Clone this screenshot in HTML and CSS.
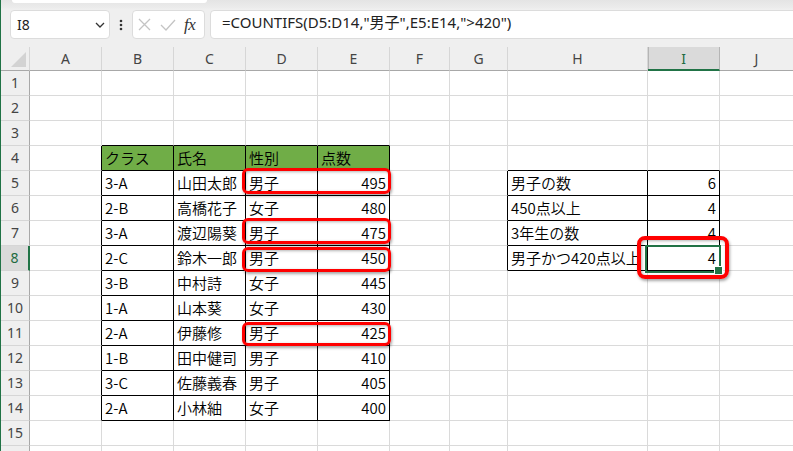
FILE: index.html
```html
<!DOCTYPE html>
<html lang="ja">
<head>
    <meta charset="UTF-8">
    <title>COUNTIFS</title>
    <link rel="stylesheet" href="styles.css">
</head>
<body>
<div class="app">
    <div class="top">
        <div class="ribbon-tail"></div>
        <div class="fbar">
            <div class="namebox">
                <span>I8</span>
                <svg width="10" height="6" viewBox="0 0 10 6"><polyline points="1,1 5,5 9,1" fill="none" stroke="#333" stroke-width="1.3"/></svg>
            </div>
            <div class="dots">
                <svg width="4" height="12" viewBox="0 0 4 12"><circle cx="2" cy="2" r="1.3" fill="#333"/><circle cx="2" cy="6" r="1.3" fill="#333"/><circle cx="2" cy="10" r="1.3" fill="#333"/></svg>
            </div>
            <div class="fxbox">
                <svg class="ic-x" width="13" height="13" viewBox="0 0 13 13"><path d="M1 1 L12 12 M12 1 L1 12" stroke="#c4c4c4" stroke-width="1.3"/></svg>
                <svg class="ic-ok" width="16" height="12" viewBox="0 0 16 12"><polyline points="1,6 6,11 15,1" fill="none" stroke="#c4c4c4" stroke-width="1.3"/></svg>
                <span class="fx">fx</span>
            </div>
            <div class="formula">=COUNTIFS(D5:D14,"男子",E5:E14,"&gt;420")</div>
        </div>
    </div>

    <div class="grid">
        <div class="ch corner"></div><div class="ch">A</div><div class="ch">B</div><div class="ch">C</div><div class="ch">D</div><div class="ch">E</div><div class="ch">F</div><div class="ch">G</div><div class="ch">H</div><div class="ch cur-c">I</div><div class="ch">J</div><div class="ch"></div>

        <div class="rh">1</div><div></div><div></div><div></div><div></div><div></div><div></div><div></div><div></div><div></div><div></div><div></div>
        <div class="rh">2</div><div></div><div></div><div></div><div></div><div></div><div></div><div></div><div></div><div></div><div></div><div></div>
        <div class="rh">3</div><div></div><div class="tb"></div><div class="tb"></div><div class="tb"></div><div class="tb"></div><div></div><div></div><div></div><div></div><div></div><div></div>
        <div class="rh">4</div><div class="lb"></div><div class="k hd">クラス</div><div class="k hd">氏名</div><div class="k hd">性別</div><div class="k hd">点数</div><div></div><div></div><div class="tb"></div><div class="tb"></div><div></div><div></div>
        <div class="rh">5</div><div class="lb"></div><div class="k">3-A</div><div class="k">山田太郎</div><div class="k">男子</div><div class="k num">495</div><div></div><div class="lb"></div><div class="k">男子の数</div><div class="k num">6</div><div></div><div></div>
        <div class="rh">6</div><div class="lb"></div><div class="k">2-B</div><div class="k">高橋花子</div><div class="k">女子</div><div class="k num">480</div><div></div><div class="lb"></div><div class="k">450点以上</div><div class="k num">4</div><div></div><div></div>
        <div class="rh">7</div><div class="lb"></div><div class="k">3-A</div><div class="k">渡辺陽葵</div><div class="k">男子</div><div class="k num">475</div><div></div><div class="lb"></div><div class="k">3年生の数</div><div class="k num">4</div><div></div><div></div>
        <div class="rh cur-r">8</div><div class="lb"></div><div class="k">2-C</div><div class="k">鈴木一郎</div><div class="k">男子</div><div class="k num">450</div><div></div><div class="lb"></div><div class="k">男子かつ420点以上</div><div class="k num sel">4</div><div></div><div></div>
        <div class="rh">9</div><div class="lb"></div><div class="k">3-B</div><div class="k">中村詩</div><div class="k">女子</div><div class="k num">445</div><div></div><div></div><div></div><div></div><div></div><div></div>
        <div class="rh">10</div><div class="lb"></div><div class="k">1-A</div><div class="k">山本葵</div><div class="k">女子</div><div class="k num">430</div><div></div><div></div><div></div><div></div><div></div><div></div>
        <div class="rh">11</div><div class="lb"></div><div class="k">2-A</div><div class="k">伊藤修</div><div class="k">男子</div><div class="k num">425</div><div></div><div></div><div></div><div></div><div></div><div></div>
        <div class="rh">12</div><div class="lb"></div><div class="k">1-B</div><div class="k">田中健司</div><div class="k">男子</div><div class="k num">410</div><div></div><div></div><div></div><div></div><div></div><div></div>
        <div class="rh">13</div><div class="lb"></div><div class="k">3-C</div><div class="k">佐藤義春</div><div class="k">男子</div><div class="k num">405</div><div></div><div></div><div></div><div></div><div></div><div></div>
        <div class="rh">14</div><div class="lb"></div><div class="k">2-A</div><div class="k">小林紬</div><div class="k">女子</div><div class="k num">400</div><div></div><div></div><div></div><div></div><div></div><div></div>
        <div class="rh">15</div><div></div><div></div><div></div><div></div><div></div><div></div><div></div><div></div><div></div><div></div><div></div>
        <div class="rh"></div><div></div><div></div><div></div><div></div><div></div><div></div><div></div><div></div><div></div><div></div><div></div>
    </div>

    <!-- red callouts drawn over the sheet -->
    <div class="mark m5"></div>
    <div class="mark m7"></div>
    <div class="mark m8"></div>
    <div class="mark m11"></div>
    <div class="mark mark-big"></div>
</div>
</body>
</html>
```

FILE: styles.css
```css
* { box-sizing: border-box; }
body {
    margin: 0; width: 793px; height: 451px; overflow: hidden;
    font-family: "Noto Sans CJK JP", sans-serif; background: #efefef;
}
.app {
    position: relative; height: 451px; overflow: hidden;
    border-left: 1px solid #217346; background: #efefef;
}

/* formula bar */
.top {
    height: 47px;
    background: linear-gradient(#e4e4e4 0, #ececec 8px, #efefef 9px);
}
.ribbon-tail {
    margin-left: 11px; width: 195px; height: 3px;
    background: #fff; border-radius: 0 0 4px 4px;
}
.fbar {
    display: flex; align-items: center;
    height: 29px; margin-top: 7px; padding-left: 9px;
}
.namebox {
    width: 100px; height: 29px; flex: none;
    display: flex; align-items: center; justify-content: space-between;
    padding: 0 4px 0 6px;
    background: #fff; border: 1px solid #dcdcdc; border-radius: 4px;
    font: 14px "Noto Sans", sans-serif; color: #222;
}
.dots { width: 22px; flex: none; display: flex; justify-content: center; }
.fxbox {
    width: 73px; height: 29px; flex: none;
    display: flex; align-items: center; padding-left: 5px;
    background: #fff; border: 1px solid #dcdcdc; border-radius: 4px;
}
.ic-ok { margin-left: 9px; }
.fx {
    margin-left: 8px; font: italic 17px "Liberation Serif", serif;
    color: #333; letter-spacing: -0.5px;
}
.formula {
    flex: 1; height: 29px; margin: 0 -20px 0 5px;
    padding-left: 11px; line-height: 27px;
    background: #fff; border: 1px solid #dcdcdc; border-radius: 4px;
    font: 15px "Noto Sans", "Noto Sans CJK JP", sans-serif; color: #222;
    white-space: nowrap;
}

/* sheet */
.grid {
    display: grid; width: 853px; background: #fff;
    grid-template-columns: 29px 72px 72px 72px 72px 72px 60px 58px 140px 72px 74px 60px;
    grid-template-rows: 24px; grid-auto-rows: 25px;
}
.grid > div {
    border-right: 1px solid #dadada; border-bottom: 1px solid #dadada;
    padding: 0 3px; font-size: 15px; font-weight: 350; line-height: 24px;
    white-space: nowrap; color: #000;
}
.grid > .ch {
    background: #efefef; border-right-color: #d6d6d6; border-bottom-color: #a8a8a8;
    text-align: center; font: 14px/23px "Noto Sans", sans-serif; color: #444;
}
.grid > .rh {
    background: #efefef; border-right-color: #a8a8a8; border-bottom-color: #d6d6d6;
    text-align: center; padding: 0; font: 14px/24px "Noto Sans", sans-serif; color: #444;
}
.corner { position: relative; }
.corner::after {
    content: ''; position: absolute; right: 3px; bottom: 3px;
    border-style: solid; border-width: 0 0 15px 15px;
    border-color: transparent transparent #d3d3d3 transparent;
}
.grid > .cur-c {
    background: #dadada; border-bottom: 2px solid #217346;
    box-shadow: inset 1px 0 #b5b5b5; border-right-color: #b5b5b5; color: #1e6b41;
}
.grid > .cur-r {
    background: #dadada; border-right: 2px solid #217346; color: #1e6b41;
}

.grid > .k { border-right-color: #000; border-bottom-color: #000; }
.grid > .lb { border-right-color: #000; }
.grid > .tb { border-bottom-color: #000; }
.grid > .hd { background: #70ad47; }
.grid > .num { text-align: right; }

.sel { position: relative; }
.sel::before {
    content: ''; position: absolute; left: -3px; top: -1px; right: -2px; bottom: -3px;
    border: 2px solid #217346;
}
.sel::after {
    content: ''; position: absolute; right: -4px; bottom: -5px;
    width: 7px; height: 7px; background: #217346; border: 1px solid #fff;
}

/* red callouts */
.mark {
    position: absolute; left: 241px; width: 149px;
    border: 3px solid #ff0000; border-radius: 6px;
    box-shadow: 1px 2px 3px rgba(0,0,0,0.35), inset 1px 1px 3px rgba(0,0,0,0.3);
}
.m5 { top: 168px; height: 26px; }
.m7 { top: 218px; height: 26px; }
.m8 { top: 247px; height: 25px; }
.m11 { top: 322px; height: 24px; }
.mark-big {
    left: 636px; top: 236px; width: 92px; height: 43px;
    border-width: 4px; border-radius: 8px;
}
```
